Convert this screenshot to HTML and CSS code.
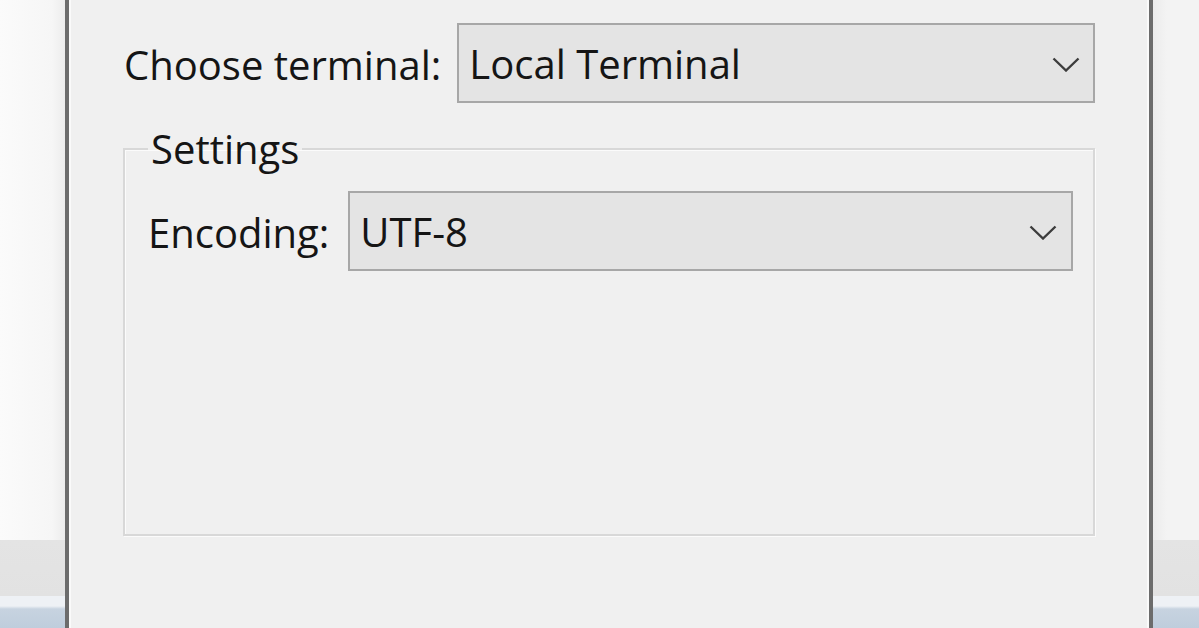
FILE: index.html
```html
<!DOCTYPE html>
<html lang="en">
<head>
<meta charset="utf-8">
<title>Choose terminal</title>
<link rel="stylesheet" href="styles.css">
</head>
<body>
<div class="screen">
  <div class="side side-left"></div>
  <div class="dialog">
    <div class="row row-top">
      <span class="label">Choose terminal:</span>
      <div class="combo combo-terminal">
        <span class="combo-text">Local Terminal</span>
        <svg class="chevron" width="28" height="15" viewBox="0 0 28 15"><polyline points="1.5,1.5 14,13.5 26.5,1.5" fill="none" stroke="#3c3c3c" stroke-width="2.4"/></svg>
      </div>
    </div>
    <fieldset class="group">
      <legend class="group-title">Settings</legend>
      <div class="row row-enc">
        <span class="label">Encoding:</span>
        <div class="combo combo-enc">
          <span class="combo-text">UTF-8</span>
          <svg class="chevron" width="28" height="15" viewBox="0 0 28 15"><polyline points="1.5,1.5 14,13.5 26.5,1.5" fill="none" stroke="#3c3c3c" stroke-width="2.4"/></svg>
        </div>
      </div>
    </fieldset>
  </div>
  <div class="side side-right"></div>
</div>
</body>
</html>
```
FILE: styles.css
```css
html, body {
  margin: 0;
  padding: 0;
  height: 100%;
  overflow: hidden;
}
body {
  font-family: "Open Sans", "Noto Sans", "Liberation Sans", sans-serif;
  color: #151515;
  background: #f4f4f4;
}
.screen {
  display: flex;
  height: 628px;
}
.side {
  flex: none;
  height: 100%;
}
.side-left {
  width: 65px;
  background: linear-gradient(to bottom,
    transparent 0, transparent 540px,
    #e4e4e4 540px, #e2e2e2 596px,
    #eef1f5 596px, #eef1f5 606px,
    #c7d3e0 609px, #bfcddc 628px),
    linear-gradient(to right, #fbfbfb 0, #f6f6f6 80%, #ececec 100%);
}
.side-right {
  flex: 1;
  background: linear-gradient(to bottom,
    transparent 0, transparent 540px,
    #e4e4e4 540px, #e2e2e2 596px,
    #eef1f5 596px, #eef1f5 606px,
    #c7d3e0 609px, #bfcddc 628px),
    linear-gradient(to right, #ebebeb 0, #f3f3f3 30%, #f3f3f3 100%);
}
.dialog {
  flex: none;
  width: 1088px;
  height: 100%;
  box-sizing: border-box;
  background: #f0f0f0;
  border-left: 4px solid #6c6c6c;
  border-right: 4px solid #6c6c6c;
  box-shadow: inset 2px 0 0 #fafafa, inset -2px 0 0 #fafafa;
  padding: 23px 54px 0 55px;
}
.row {
  display: flex;
  align-items: center;
  gap: 16px;
}
.label {
  font-size: 40px;
  line-height: 50px;
  white-space: nowrap;
  padding-top: 4px;
}
.combo {
  flex: 1;
  display: flex;
  align-items: center;
  justify-content: space-between;
  box-sizing: border-box;
  height: 80px;
  background: #e4e4e4;
  border: 2px solid #a7a7a7;
  padding: 0 13px 0 10px;
}
.combo-text {
  font-size: 40px;
  line-height: 50px;
  padding-top: 2px;
}
.chevron {
  flex: none;
  margin-top: 2px;
}
.combo-enc {
  padding-right: 14px;
}
.group {
  margin: 21px 0 0 -1px;
  padding: 17px 20px 263px 23px;
  border: 2px solid #d8d8d8;
  box-shadow: 1px 1px 0 #fbfbfb, inset 1px 1px 0 #fbfbfb;
  min-width: 0;
}
.group-title {
  font-size: 40px;
  line-height: 50px;
  padding: 0 3px;
  margin-left: 0;
}
.row-enc {
  gap: 19px;
}
```
